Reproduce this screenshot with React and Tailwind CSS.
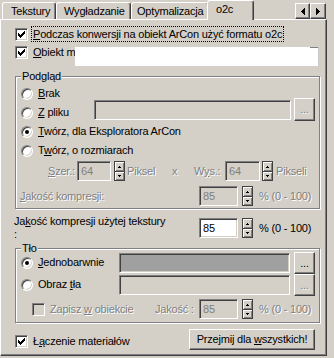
import React from "react";

const ETCH = "border border-[#808080] shadow-[1px_1px_0_#fff,inset_1px_1px_0_#fff]";
const SUNKEN =
  "border border-t-[#808080] border-l-[#808080] border-r-white border-b-white shadow-[inset_1px_1px_0_#404040,inset_-1px_-1px_0_#d4d0c8]";
const RAISED =
  "border border-t-white border-l-white border-r-[#404040] border-b-[#404040] shadow-[inset_-1px_-1px_0_#808080]";
const DIS = "text-[#808080] [text-shadow:1px_1px_0_#fff]";

function Check({ checked, disabled, className = "" }) {
  return (
    <span
      className={`flex items-center justify-center w-[13px] h-[13px] shrink-0 ${SUNKEN} ${
        disabled ? "bg-[#d4d0c8]" : "bg-white"
      } ${className}`}
    >
      {checked && (
        <svg width="7" height="7" viewBox="0 0 7 7" shapeRendering="crispEdges">
          <path
            d="M6 0h1v1h-1z M5 1h2v1h-2z M0 2h1v1h-1z M4 2h3v1h-3z M0 3h2v1h-2z M3 3h3v1h-3z M0 4h5v1h-5z M1 5h3v1h-3z M2 6h1v1h-1z"
            fill={disabled ? "#808080" : "#000"}
          />
        </svg>
      )}
    </span>
  );
}

function Radio({ checked, className = "" }) {
  return (
    <span
      className={`flex items-center justify-center w-[12px] h-[12px] shrink-0 rounded-full bg-white ${SUNKEN} ${className}`}
    >
      {checked && <span className="w-[4px] h-[4px] rounded-full bg-black" />}
    </span>
  );
}

function Field({ value, disabled, className = "" }) {
  return (
    <span
      className={`flex items-center pl-[3px] h-[20px] shrink-0 ${SUNKEN} ${
        disabled ? "bg-[#d4d0c8] text-[#808080]" : "bg-white text-black"
      } ${className}`}
    >
      {value}
    </span>
  );
}

function Spin({ className = "" }) {
  return (
    <span className={`flex flex-col w-[11px] h-[20px] shrink-0 border border-[#404040] ${className}`}>
      <span className="flex h-[9px] items-center justify-center bg-[#d4d0c8] shadow-[inset_1px_1px_0_#fff,inset_-1px_-1px_0_#808080]">
        <svg width="3" height="2" viewBox="0 0 3 2" shapeRendering="crispEdges">
          <path d="M1 0h1v1h-1z M0 1h3v1h-3z" fill="#000" />
        </svg>
      </span>
      <span className="flex flex-1 items-center justify-center border-t border-[#404040] bg-[#d4d0c8] shadow-[inset_1px_1px_0_#fff,inset_-1px_-1px_0_#808080]">
        <svg width="3" height="2" viewBox="0 0 3 2" shapeRendering="crispEdges">
          <path d="M0 0h3v1h-3z M1 1h1v1h-1z" fill="#000" />
        </svg>
      </span>
    </span>
  );
}

function Btn({ children, disabled, className = "" }) {
  return (
    <span
      className={`flex items-center justify-center shrink-0 bg-[#d4d0c8] ${RAISED} ${
        disabled ? DIS : "text-black"
      } ${className}`}
    >
      <span className="whitespace-nowrap">{children}</span>
    </span>
  );
}

const TAB =
  "flex items-center h-[17px] border-t border-l border-r border-t-white border-l-white border-r-[#404040] rounded-t-[3px] shadow-[inset_-1px_0_0_#808080]";

function Arrow({ dir, className = "" }) {
  return (
    <span className={`flex items-center justify-center h-[16px] bg-[#d4d0c8] ${RAISED} ${className}`}>
      <svg width="4" height="7" viewBox="0 0 4 7" shapeRendering="crispEdges">
        {dir === "left" ? (
          <path d="M0 3h1v1h-1z M1 2h1v3h-1z M2 1h1v5h-1z M3 0h1v7h-1z" fill="#000" />
        ) : (
          <path d="M3 3h1v1h-1z M2 2h1v3h-1z M1 1h1v5h-1z M0 0h1v7h-1z" fill="#000" />
        )}
      </svg>
    </span>
  );
}

function Percent({ value, disabled }) {
  return (
    <>
      <Field value={value} disabled={disabled} className="w-[39px]" />
      <Spin className="ml-[4px]" />
      <span className={`ml-[6px] leading-[20px] ${disabled ? DIS : ""}`}>% (0 - 100)</span>
    </>
  );
}

function RadioRow({ checked, children }) {
  return (
    <div className="flex items-start h-[19px] shrink-0">
      <Radio checked={checked} className="mt-[4px]" />
      <span className="ml-[5px] mt-[3px] leading-[13px] whitespace-nowrap">{children}</span>
    </div>
  );
}

export default function App() {
  return (
    <div className="w-[334px] h-[358px] bg-[#d4d0c8] overflow-hidden text-[11px] leading-[13px] tracking-[-0.2px] text-black font-['Liberation_Sans',Arial,sans-serif]">
      {/* tab strip */}
      <div className="relative z-10 flex items-end h-[19px] pl-[2px] pr-[8px]">
        <div className={`${TAB} w-[54px] pl-[8px]`}>Tekstury</div>
        <div className={`${TAB} w-[75px] pl-[7px]`}>Wygładzanie</div>
        <div className={`${TAB} w-[78px] pl-[5px]`}>Optymalizacja</div>
        <div className="relative z-10 -ml-[2px] -mb-px flex items-center h-[20px] w-[47px] pl-[8px] pb-[2px] bg-[#d4d0c8] border-t border-l border-r border-t-white border-l-white border-r-[#404040] rounded-t-[3px] shadow-[inset_-1px_0_0_#808080]">
          o2c
        </div>
        <div className="ml-auto self-start mt-[3px] flex">
          <Arrow dir="left" className="w-[15px]" />
          <Arrow dir="right" className="w-[16px]" />
        </div>
      </div>

      {/* page */}
      <div className="flex flex-col w-[327px] h-[337px] pl-[14px] pt-[6px] border border-t-white border-l-white border-r-[#404040] border-b-[#404040] shadow-[inset_-1px_-1px_0_#808080]">
        <div className="flex items-center h-[16px] shrink-0">
          <Check checked />
          <span className="ml-[3px] flex items-center h-[16px] px-[1px] border border-dotted border-black whitespace-nowrap">
            <span>
              <u>P</u>odczas konwersji na obiekt ArCon użyć formatu o2c
            </span>
          </span>
        </div>

        <div className="relative mt-[2px] flex items-center h-[16px] shrink-0">
          <Check checked />
          <span className="ml-[5px] whitespace-nowrap">
            <u>O</u>biekt m
          </span>
          <div className="absolute left-[60px] top-[3px] w-[244px] h-[19px] bg-white border-r border-[#c8c8c8]">
            <div className="absolute right-0 top-0 w-[8px] h-[1px] bg-[#808080]" />
          </div>
        </div>

        {/* Podgląd */}
        <div className={`relative mt-[16px] flex flex-col w-[305px] h-[133px] shrink-0 pl-[5px] pr-[4px] pt-[7px] ${ETCH}`}>
          <span className="absolute -top-[7px] left-[5px] px-[1px] bg-[#d4d0c8] leading-[13px]">Podgląd</span>
          <RadioRow>
            <u>B</u>rak
          </RadioRow>
          <div className="flex items-start h-[19px] shrink-0">
            <Radio className="mt-[4px]" />
            <span className="ml-[5px] mt-[3px] leading-[13px] whitespace-nowrap">
              <u>Z</u> pliku
            </span>
            <Field value="" disabled className="ml-auto -mt-[3px] w-[197px]" />
            <Btn disabled className="ml-[3px] -mt-[5px] w-[21px] h-[23px]">
              ...
            </Btn>
          </div>
          <RadioRow checked>
            <u>T</u>wórz, dla Eksploratora ArCon
          </RadioRow>
          <RadioRow>
            T<u>w</u>órz, o rozmiarach
          </RadioRow>
          <div className="mt-[1px] flex items-start h-[20px] shrink-0">
            <span className={`ml-[27px] w-[29px] leading-[20px] ${DIS}`}>
              <u>S</u>zer.:
            </span>
            <Field value="64" disabled className="w-[34px]" />
            <Spin className="ml-[3px]" />
            <span className={`ml-[2px] w-[45px] leading-[20px] ${DIS}`}>Piksel</span>
            <span className={`w-[22px] leading-[20px] ${DIS}`}>x</span>
            <span className={`w-[31px] leading-[20px] ${DIS}`}>
              W<u>y</u>s.:
            </span>
            <Field value="64" disabled className="w-[35px]" />
            <Spin className="ml-[2px]" />
            <span className={`ml-[3px] leading-[20px] ${DIS}`}>Pikseli</span>
          </div>
          <div className="mt-[5px] flex items-start h-[20px] shrink-0">
            <span className={`-ml-[1px] w-[179px] leading-[20px] ${DIS}`}>
              <u>J</u>akość kompresji:
            </span>
            <Percent value="85" disabled />
          </div>
        </div>

        {/* Jakość kompresji użytej tekstury */}
        <div className="mt-[6px] flex items-start h-[26px] shrink-0">
          <span className="-ml-[1px] w-[185px] leading-[13px]">
            Ja<u>k</u>ość kompresji użytej tekstury
            <br />:
          </span>
          <div className="mt-[3px] flex items-start">
            <Percent value="85" />
          </div>
        </div>

        {/* Tło */}
        <div className={`relative mt-[7px] flex flex-col w-[305px] h-[75px] shrink-0 pl-[5px] pr-[4px] pt-[3px] ${ETCH}`}>
          <span className="absolute -top-[7px] left-[5px] px-[1px] bg-[#d4d0c8] leading-[13px]">Tło</span>
          <div className="flex items-start h-[22px] shrink-0">
            <Radio checked className="mt-[5px]" />
            <span className="ml-[5px] mt-[4px] leading-[13px]">
              <u>J</u>ednobarwnie
            </span>
            <span className={`ml-auto mt-[1px] w-[171px] h-[20px] bg-[#a0a0a0] ${SUNKEN}`} />
            <Btn className="ml-[4px] w-[21px] h-[22px]">...</Btn>
          </div>
          <div className="flex items-start h-[22px] shrink-0">
            <Radio className="mt-[5px]" />
            <span className="ml-[5px] mt-[4px] leading-[13px] whitespace-nowrap">
              Obraz <u>t</u>ła
            </span>
            <Field value="" disabled className="ml-auto mt-[1px] w-[171px]" />
            <Btn disabled className="ml-[4px] w-[21px] h-[22px]">
              ...
            </Btn>
          </div>
          <div className="mt-[3px] flex items-start h-[20px] shrink-0">
            <Check disabled className="ml-[11px] mt-[4px]" />
            <span className={`ml-[5px] w-[105px] leading-[20px] whitespace-nowrap ${DIS}`}>
              Zapisz <u>w</u> obiekcie
            </span>
            <span className={`w-[44px] leading-[20px] ${DIS}`}>Jakość :</span>
            <Percent value="85" disabled />
          </div>
        </div>

        {/* bottom row */}
        <div className="mt-[6px] flex items-start w-[300px] h-[21px] shrink-0">
          <div className="flex items-center mt-[6px]">
            <Check checked />
            <span className="ml-[5px] leading-[13px]">
              Ł<u>ą</u>czenie materiałów
            </span>
          </div>
          <Btn className="ml-auto w-[126px] h-[21px]">
            Przejmij dla <u>w</u>szystkich!
          </Btn>
        </div>
      </div>
    </div>
  );
}
